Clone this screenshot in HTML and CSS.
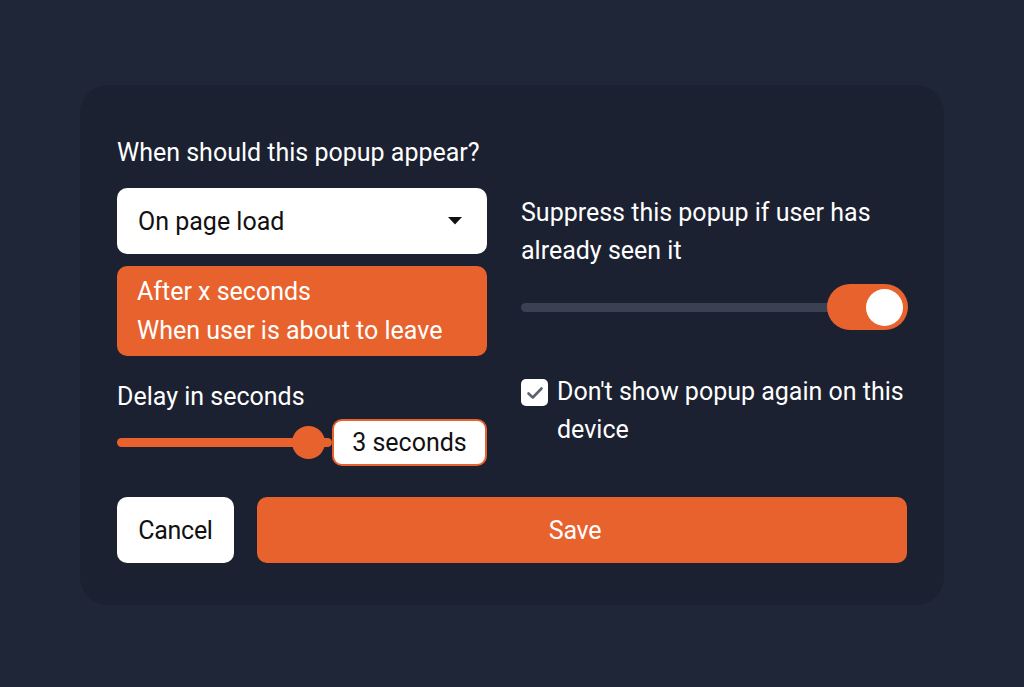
FILE: index.html
```html
<!DOCTYPE html>
<html>
<head>
<meta charset="utf-8">
<link rel="stylesheet" href="styles.css">
</head>
<body>
<div class="card">
  <div class="grid">
    <div class="left">
      <div class="title">When should this popup appear?</div>
      <div class="select">
        <span>On page load</span>
        <svg class="caret" width="14" height="8" viewBox="0 0 14 8"><path d="M0 0 H14 L7 7.5 Z" fill="#111"/></svg>
      </div>
      <div class="options">
        <div>After x seconds</div>
        <div>When user is about to leave</div>
      </div>
      <div class="label delay-label">Delay in seconds</div>
      <div class="slider-row">
        <div class="slider">
          <div class="slider-track"></div>
          <div class="slider-thumb"></div>
        </div>
        <div class="value-box">3 seconds</div>
      </div>
    </div>
    <div class="right">
      <div class="label suppress">Suppress this popup if user has already seen it</div>
      <div class="toggle-row">
        <div class="toggle-track"></div>
        <div class="toggle"><div class="knob"></div></div>
      </div>
      <div class="check-row">
        <div class="checkbox">
          <svg width="18" height="14" viewBox="0 0 18 14"><path d="M2.5 7.5 L6.8 11.5 L15.5 2.5" fill="none" stroke="#5b6270" stroke-width="2.6" stroke-linecap="round" stroke-linejoin="round"/></svg>
        </div>
        <div class="label check-label">Don't show popup again on this device</div>
      </div>
    </div>
  </div>
  <div class="buttons">
    <button class="btn cancel">Cancel</button>
    <button class="btn save">Save</button>
  </div>
</div>
</body>
</html>
```
FILE: styles.css
```css
* { box-sizing: border-box; }
html, body { margin: 0; padding: 0; }
body {
  width: 1024px;
  height: 687px;
  background: #1f2637;
  font-family: Roboto, "Noto Sans", sans-serif;
  color: #fff;
  padding: 85px 80px 0 80px;
}
.card {
  width: 864px;
  height: 520px;
  background: #1b2131;
  border-radius: 28px;
  padding: 52px 36px 0 37px;
}
.grid {
  display: grid;
  grid-template-columns: 370px 387px;
  column-gap: 34px;
}
.title {
  font-size: 25px;
  line-height: 32px;
  margin-bottom: 19px;
}
.select {
  height: 66px;
  background: #fff;
  border-radius: 10px;
  display: flex;
  align-items: center;
  justify-content: space-between;
  padding: 0 25px 0 21px;
  color: #111;
  font-size: 25px;
}
.options {
  margin-top: 12px;
  height: 90px;
  background: #e8622e;
  border-radius: 10px;
  padding: 6px 20px 0 20px;
  font-size: 25px;
  line-height: 39px;
}
.label {
  font-size: 25px;
  line-height: 38px;
}
.delay-label {
  margin-top: 22px;
}
.slider-row {
  display: flex;
  align-items: center;
  margin-top: 3px;
}
.slider {
  position: relative;
  width: 215px;
  height: 34px;
  display: flex;
  align-items: center;
}
.slider-track {
  width: 100%;
  height: 9px;
  border-radius: 5px;
  background: #e8622e;
}
.slider-thumb {
  position: absolute;
  left: 175px;
  top: 0;
  width: 33px;
  height: 33px;
  border-radius: 50%;
  background: #e8622e;
}
.value-box {
  width: 155px;
  height: 47px;
  background: #fff;
  border: 2px solid #e8622e;
  border-radius: 10px;
  color: #111;
  font-size: 25px;
  display: flex;
  align-items: center;
  justify-content: center;
}
.suppress {
  margin-top: 57px;
  width: 380px;
}
.toggle-row {
  display: flex;
  align-items: center;
  margin-top: 14px;
}
.toggle-track {
  flex: 1;
  height: 9px;
  border-radius: 5px;
  background: #3a4152;
  margin-right: -24px;
}
.toggle {
  position: relative;
  width: 81px;
  height: 46px;
  border-radius: 23px;
  background: #e8622e;
  display: flex;
  align-items: center;
  justify-content: flex-end;
  padding-right: 5px;
}
.knob {
  width: 37px;
  height: 37px;
  border-radius: 50%;
  background: #fff;
}
.check-row {
  display: flex;
  align-items: flex-start;
  margin-top: 43px;
}
.checkbox {
  flex: none;
  width: 27px;
  height: 27px;
  background: #fff;
  border-radius: 5px;
  margin-top: 6px;
  margin-right: 9px;
  display: flex;
  align-items: center;
  justify-content: center;
}
.check-label {
  width: 360px;
}
.buttons {
  display: flex;
  gap: 23px;
  margin-top: 31px;
}
.btn {
  height: 66px;
  border: none;
  border-radius: 10px;
  font-family: Roboto, "Noto Sans", sans-serif;
  font-size: 25px;
  font-weight: 400;
  letter-spacing: -0.3px;
  padding: 0;
}
.cancel {
  width: 117px;
  background: #fff;
  color: #111;
}
.save {
  width: 650px;
  background: #e8622e;
  color: #fff;
  padding-right: 14px;
}
```
